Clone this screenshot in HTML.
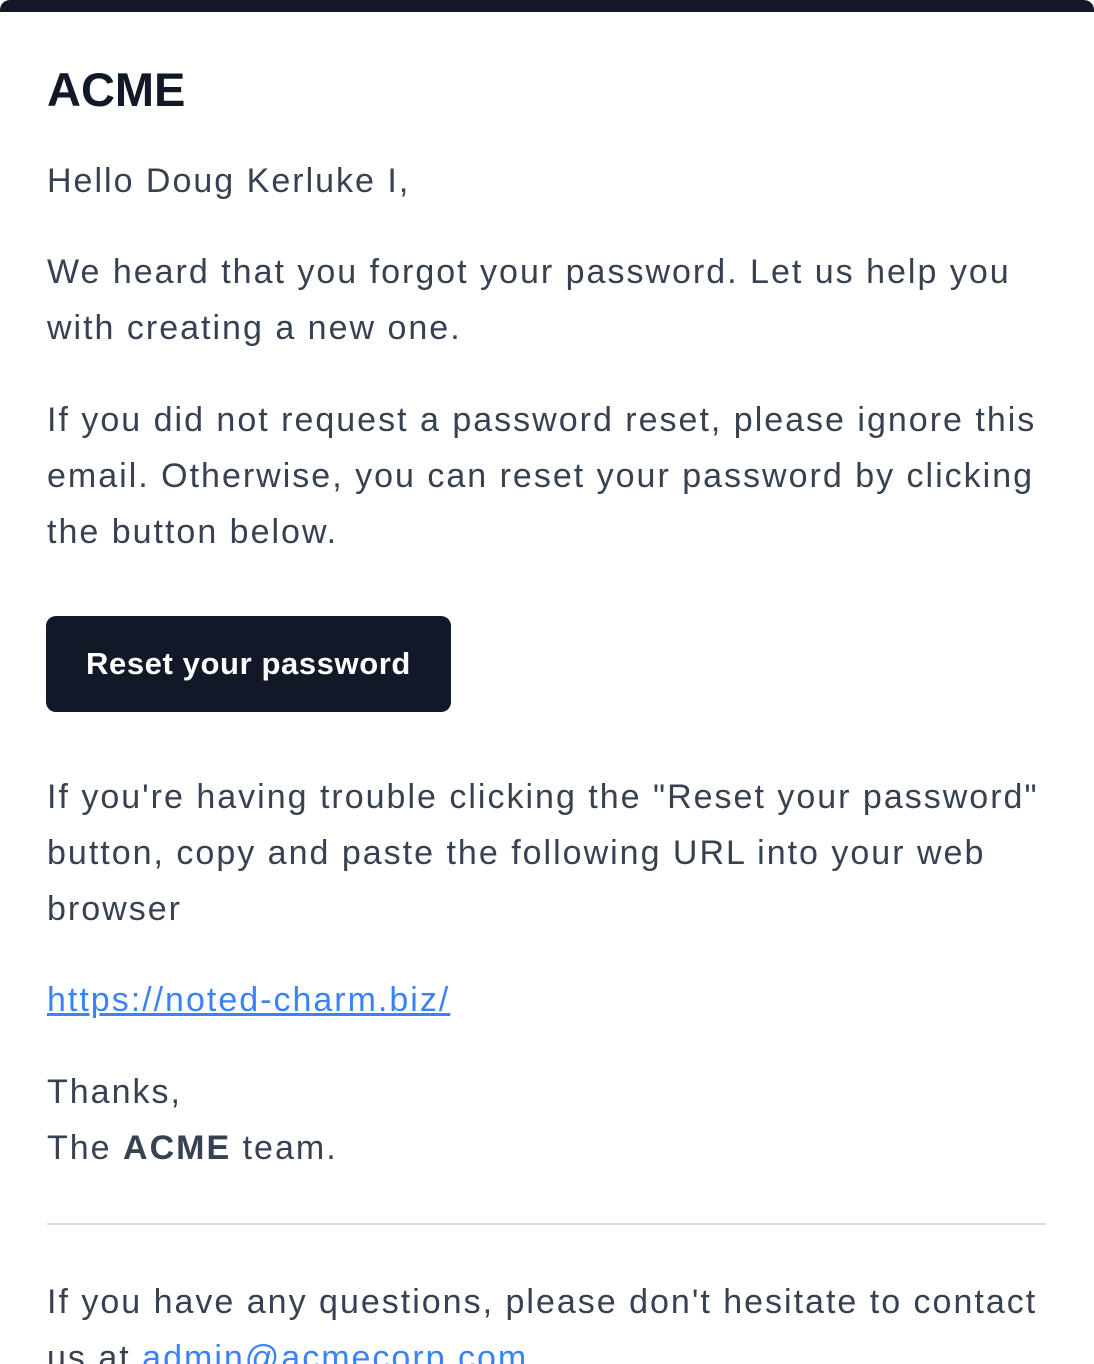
<!DOCTYPE html>
<html><head><meta charset="utf-8"><style>
html,body{margin:0;padding:0;background:#fff;width:1094px;height:1364px;overflow:hidden}
body{font-family:"Liberation Sans",Arial,sans-serif;color:#374151;position:relative}
.bar{position:absolute;left:0;top:0;width:1094px;height:12px;background:#111827;border-radius:10px 10px 0 0}
.b{position:absolute;left:47px;font-size:34px;line-height:56px;white-space:nowrap;letter-spacing:2px}
h1{position:absolute;left:47px;top:60px;margin:0;font-size:47px;line-height:60px;font-weight:bold;color:#111827}
.btn{position:absolute;left:46px;top:616px;width:405px;height:96px;background:#111827;border-radius:10px;color:#fff;font-weight:bold;font-size:31px;line-height:96px;text-align:center;letter-spacing:0.6px}
a{color:#3b82f6;text-decoration:underline}
.hr{position:absolute;left:47px;top:1223px;width:999px;height:2px;background:#d8dee6}
</style></head><body>
<div class="bar"></div>
<h1>ACME</h1>
<div class="b" style="top:153px">Hello Doug Kerluke I,</div>
<div class="b" style="top:244px">We heard that you forgot your password. Let us help you<br>with creating a new one.</div>
<div class="b" style="top:392px">If you did not request a password reset, please ignore this<br>email. Otherwise, you can reset your password by clicking<br>the button below.</div>
<div class="btn">Reset your password</div>
<div class="b" style="top:769px">If you're having trouble clicking the "Reset your password"<br>button, copy and paste the following URL into your web<br>browser</div>
<div class="b" style="top:972px"><a>https://noted-charm.biz/</a></div>
<div class="b" style="top:1064px">Thanks,<br>The <b>ACME</b> team.</div>
<div class="hr"></div>
<div class="b" style="top:1274px">If you have any questions, please don't hesitate to contact<br>us at <a style="text-decoration:none">admin@acmecorp.com</a></div>
</body></html>
